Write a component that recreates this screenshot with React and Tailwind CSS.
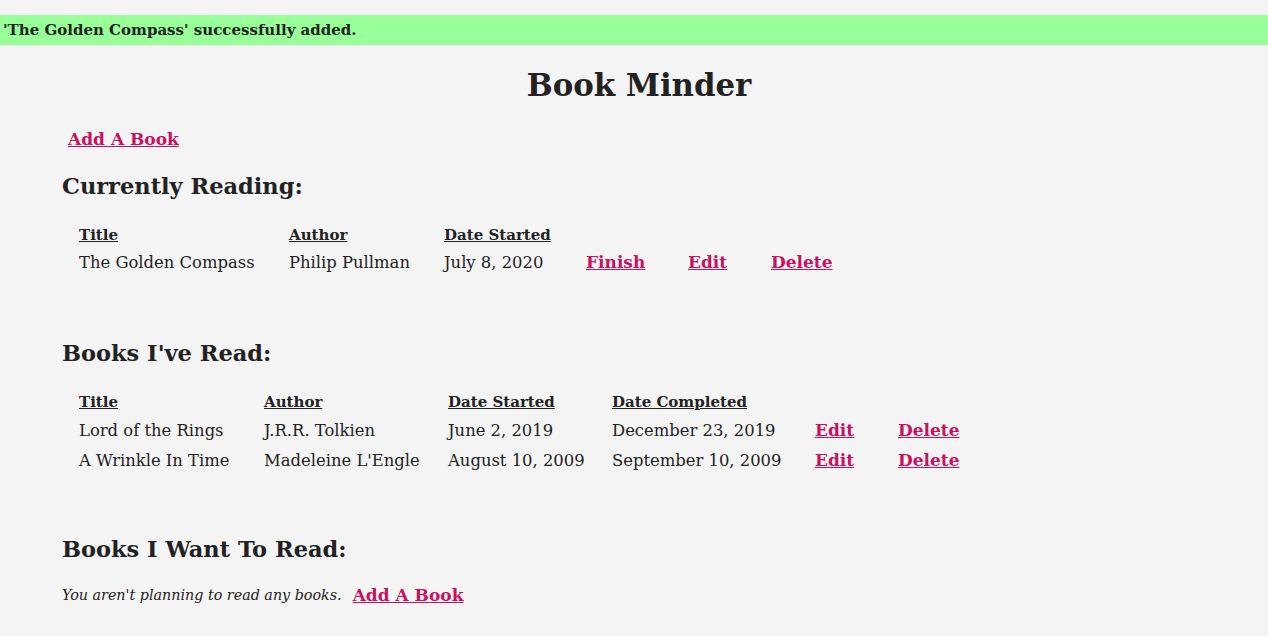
import React from 'react';

const font = { fontFamily: '"DejaVu Serif", "Liberation Serif", serif' };

const currentlyReading = [
    { title: 'The Golden Compass', author: 'Philip Pullman', started: 'July 8, 2020' },
];

const booksRead = [
    { title: 'Lord of the Rings', author: 'J.R.R. Tolkien', started: 'June 2, 2019', completed: 'December 23, 2019' },
    { title: 'A Wrinkle In Time', author: "Madeleine L'Engle", started: 'August 10, 2009', completed: 'September 10, 2009' },
];

function Link({ children, className = '' }) {
    return (
        <a href="#" className={`font-bold underline text-[#c8115f] text-[17px] ${className}`}>
            {children}
        </a>
    );
}

function Th({ children }) {
    return <span className="font-bold underline text-[15px]">{children}</span>;
}

function App() {
    return (
        <div className="min-h-screen bg-[#f4f4f4] text-[#222] pt-[15px] text-[16.4px]" style={font}>
            <div className="h-[30px] bg-[#99ff99] flex items-center pl-[3px] font-bold text-[15px]">
                'The Golden Compass' successfully added.
            </div>

            <h1 className="mt-[20px] pl-[10px] h-[40px] leading-[40px] text-center text-[30.8px] font-bold">
                Book Minder
            </h1>

            <div className="mt-[22px] pl-[68px] h-[24px] leading-[24px]">
                <Link>Add A Book</Link>
            </div>

            <h2 className="mt-[19px] pl-[62px] h-[32px] leading-[32px] text-[22.5px] font-bold">
                Currently Reading:
            </h2>

            <div className="mt-[19px] pl-[79px] grid grid-cols-[210px_155px_142px_102px_83px_auto] items-center">
                <div className="h-[28px] leading-[28px]"><Th>Title</Th></div>
                <div className="h-[28px] leading-[28px]"><Th>Author</Th></div>
                <div className="h-[28px] leading-[28px] col-span-4"><Th>Date Started</Th></div>
                {currentlyReading.map(book => (
                    <React.Fragment key={book.title}>
                        <div className="h-[28px] leading-[28px]">{book.title}</div>
                        <div>{book.author}</div>
                        <div>{book.started}</div>
                        <div><Link>Finish</Link></div>
                        <div><Link>Edit</Link></div>
                        <div><Link>Delete</Link></div>
                    </React.Fragment>
                ))}
            </div>

            <h2 className="mt-[60px] pl-[62px] h-[32px] leading-[32px] text-[22.5px] font-bold">
                Books I've Read:
            </h2>

            <div className="mt-[19px] pl-[79px] grid grid-cols-[185px_184px_164px_203px_83px_auto] items-center">
                <div className="h-[28px] leading-[28px]"><Th>Title</Th></div>
                <div><Th>Author</Th></div>
                <div><Th>Date Started</Th></div>
                <div className="col-span-3"><Th>Date Completed</Th></div>
                {booksRead.map(book => (
                    <React.Fragment key={book.title}>
                        <div className="h-[30px] leading-[30px]">{book.title}</div>
                        <div>{book.author}</div>
                        <div>{book.started}</div>
                        <div>{book.completed}</div>
                        <div><Link>Edit</Link></div>
                        <div><Link>Delete</Link></div>
                    </React.Fragment>
                ))}
            </div>

            <h2 className="mt-[57px] pl-[62px] h-[32px] leading-[32px] text-[22.5px] font-bold">
                Books I Want To Read:
            </h2>

            <div className="mt-[16px] pl-[62px] h-[28px] leading-[28px] flex items-center gap-[11px]">
                <em className="text-[14.3px]">You aren't planning to read any books.</em>
                <Link>Add A Book</Link>
            </div>
        </div>
    );
}

export default App;
